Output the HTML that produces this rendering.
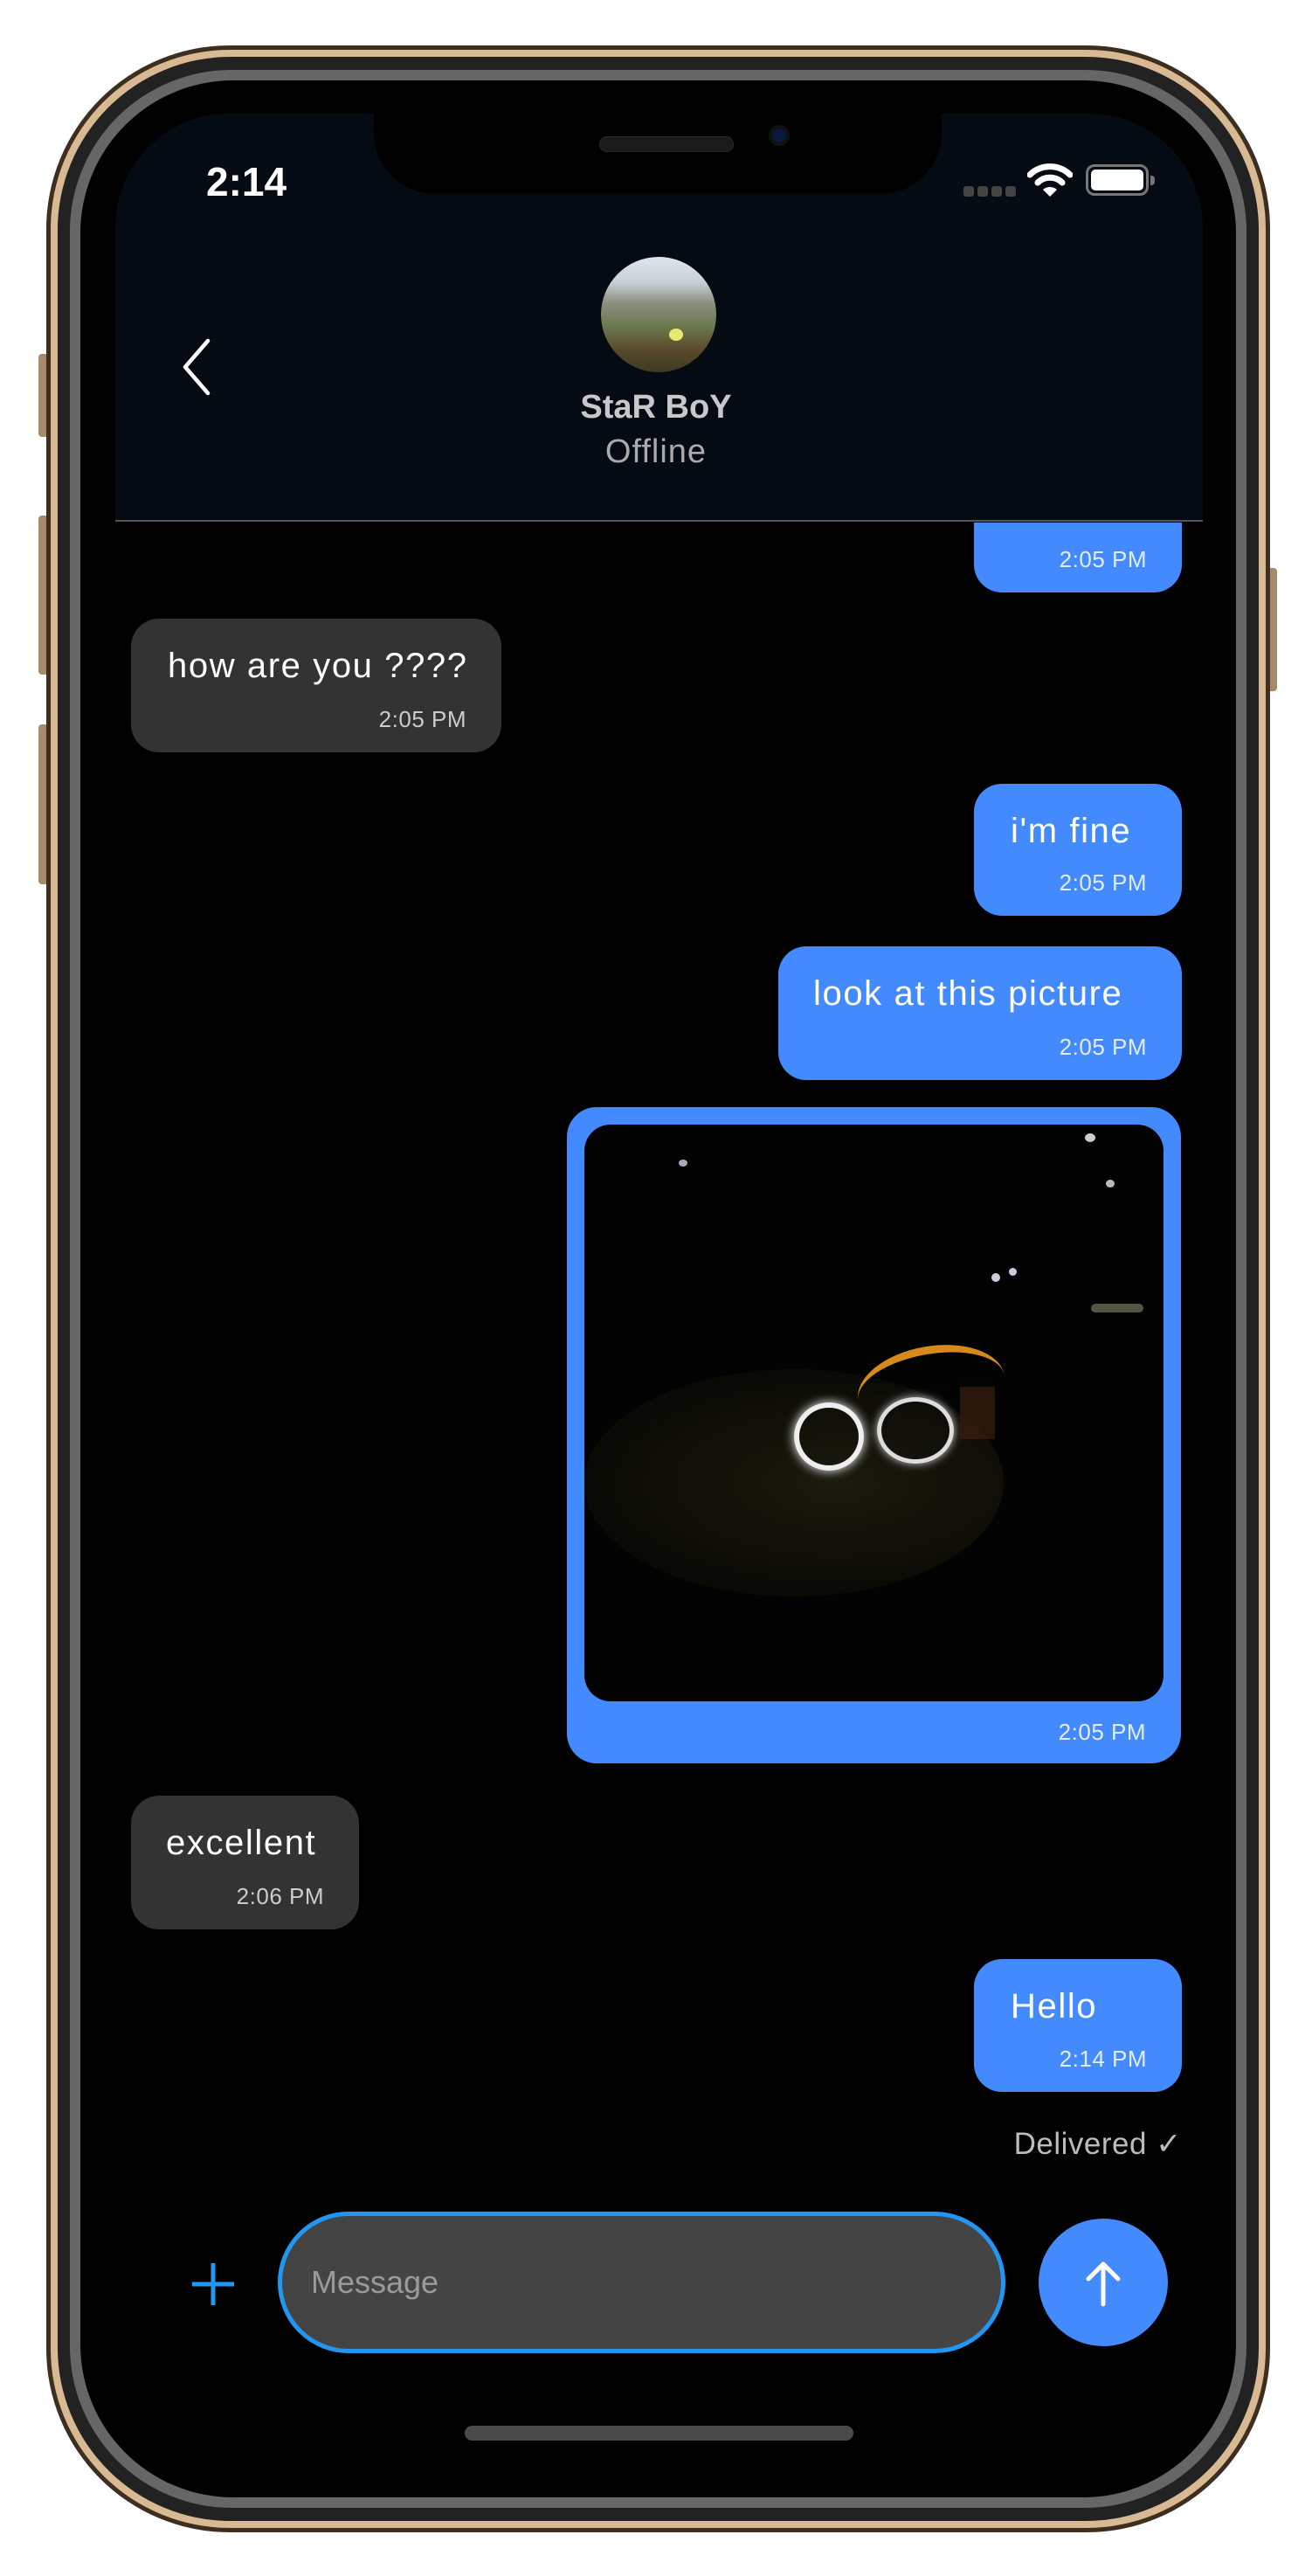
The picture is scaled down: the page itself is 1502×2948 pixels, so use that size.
<!DOCTYPE html>
<html><head><meta charset="utf-8">
<style>
*{margin:0;padding:0;box-sizing:border-box}
html,body{width:1502px;height:2948px;background:#fff;overflow:hidden;font-family:"Liberation Sans","DejaVu Sans",sans-serif}
.abs{position:absolute}
.bubble{position:absolute;border-radius:32px;color:#fff}
.in{background:#333}
.out{background:#448aff}
.bt{position:absolute;font-size:40px;letter-spacing:1.6px}
.ts{position:absolute;font-size:26px;right:40px;bottom:22px;color:#ccc;letter-spacing:0.5px}
.out .ts{color:#e3ecff}
</style></head><body>
<!-- side buttons -->
<div class="abs" style="left:44px;top:405px;width:12px;height:95px;background:#a88a6a;border-radius:4px"></div>
<div class="abs" style="left:44px;top:590px;width:12px;height:182px;background:#a88a6a;border-radius:4px"></div>
<div class="abs" style="left:44px;top:829px;width:12px;height:183px;background:#a88a6a;border-radius:4px"></div>
<div class="abs" style="left:1450px;top:650px;width:12px;height:141px;background:#a88a6a;border-radius:4px"></div>
<!-- phone frame -->
<div class="abs" style="left:53px;top:52px;width:1401px;height:2846px;border-radius:210px;background:#3e2e20"></div>
<div class="abs" style="left:58px;top:57px;width:1391px;height:2836px;border-radius:205px;background:#d9b894"></div>
<div class="abs" style="left:66px;top:65px;width:1375px;height:2820px;border-radius:198px;background:#222"></div>
<div class="abs" style="left:80px;top:80px;width:1347px;height:2790px;border-radius:185px;background:#666"></div>
<div class="abs" style="left:92px;top:92px;width:1323px;height:2766px;border-radius:175px;background:#000"></div>
<!-- screen -->
<div class="abs" style="left:132px;top:130px;width:1245px;height:2689px;border-radius:130px;background:#000;overflow:hidden">
  <div class="abs" style="left:0;top:0;width:1245px;height:466px;background:#050b12"></div>
  <div class="abs" style="left:0;top:465px;width:1245px;height:2px;background:#555"></div>
  <div class="abs" style="left:296px;top:-10px;width:650px;height:102px;background:#000;border-radius:0 0 70px 70px"></div>
</div>
<div class="abs" style="left:686px;top:156px;width:154px;height:18px;border-radius:9px;background:#1a1a1a;border:1px solid #2a2a2a"></div>
<div class="abs" style="left:880px;top:143px;width:24px;height:24px;border-radius:50%;background:#0a1a3a;border:4px solid #111"></div>
<!-- status bar -->
<div class="abs" style="left:236px;top:181px;font-size:46px;font-weight:bold;color:#fff">2:14</div>
<div class="abs" style="left:1103px;top:213px;width:12px;height:12px;border-radius:3px;background:#444"></div>
<div class="abs" style="left:1119px;top:213px;width:12px;height:12px;border-radius:3px;background:#444"></div>
<div class="abs" style="left:1135px;top:213px;width:12px;height:12px;border-radius:3px;background:#444"></div>
<div class="abs" style="left:1151px;top:213px;width:12px;height:12px;border-radius:3px;background:#444"></div>
<svg class="abs" style="left:1176px;top:186px" width="52" height="40" viewBox="0 0 52 40"><path d="M3 14 A33 33 0 0 1 49 14" stroke="#fff" stroke-width="7" fill="none" stroke-linecap="round"/><path d="M12 23 A20 20 0 0 1 40 23" stroke="#fff" stroke-width="7" fill="none" stroke-linecap="round"/><path d="M18 31 L26 39 L34 31 A12 12 0 0 0 18 31Z" fill="#fff"/></svg>
<div class="abs" style="left:1243px;top:188px;width:72px;height:36px;border-radius:10px;border:3px solid #777"></div>
<div class="abs" style="left:1249px;top:194px;width:60px;height:24px;border-radius:5px;background:#fff"></div>
<div class="abs" style="left:1317px;top:201px;width:5px;height:11px;border-radius:0 4px 4px 0;background:#777"></div>
<!-- header -->
<svg class="abs" style="left:200px;top:384px" width="50" height="72" viewBox="0 0 50 72"><path d="M38 6 L12 36 L38 66" stroke="#fff" stroke-width="4.5" fill="none" stroke-linecap="round" stroke-linejoin="round"/></svg>
<div class="abs" style="left:688px;top:294px;width:132px;height:132px;border-radius:50%;overflow:hidden;background:linear-gradient(180deg,#dfe6ee 0%,#c9d0d6 22%,#8a8f80 40%,#6c7a4e 60%,#5a4a2c 80%,#3e3a22 100%)">
  <div class="abs" style="left:78px;top:82px;width:16px;height:14px;border-radius:50%;background:#e8e870"></div>
</div>
<div class="abs" style="left:0;width:1502px;top:445px;text-align:center;font-size:38px;color:#c8c8c8;font-weight:bold">StaR BoY</div>
<div class="abs" style="left:0;width:1502px;top:496px;text-align:center;font-size:38px;color:#aaa;letter-spacing:1px">Offline</div>
<!-- messages -->
<div class="abs" style="left:132px;top:598px;width:1245px;height:2221px;overflow:hidden">
  <div class="bubble out" style="left:983px;top:-40px;width:238px;height:120px"><div class="ts">2:05 PM</div></div>
</div>
<div class="bubble in" style="left:150px;top:708px;width:424px;height:153px"><div class="bt" style="left:42px;top:32px">how are you ????</div><div class="ts">2:05 PM</div></div>
<div class="bubble out" style="left:1115px;top:897px;width:238px;height:151px"><div class="bt" style="left:42px;top:32px">i'm fine</div><div class="ts">2:05 PM</div></div>
<div class="bubble out" style="left:891px;top:1083px;width:462px;height:153px"><div class="bt" style="left:40px;top:32px">look at this picture</div><div class="ts">2:05 PM</div></div>
<div class="bubble out" style="left:649px;top:1267px;width:703px;height:751px;border-radius:34px"><div class="ts" style="bottom:20px">2:05 PM</div></div>
<div class="abs" style="left:669px;top:1287px;width:663px;height:660px;border-radius:30px;overflow:hidden;background:#030303">
  <div class="abs" style="left:0;top:280px;width:480px;height:260px;border-radius:50%;background:radial-gradient(ellipse at 60% 50%,#1a1a0e 0%,#0c0c06 60%,transparent 100%)"></div>
  <div class="abs" style="left:308px;top:254px;width:170px;height:48px;border-top:9px solid #d58a1a;border-radius:50% 50% 0 0/100% 100% 0 0;transform:rotate(-10deg)"></div>
  <div class="abs" style="left:240px;top:318px;width:80px;height:78px;border-radius:50%;border:6px solid #eee;box-shadow:0 0 12px #fff"></div>
  <div class="abs" style="left:335px;top:312px;width:88px;height:76px;border-radius:50%;border:5px solid #ddd;box-shadow:0 0 10px #ccc"></div>
  <div class="abs" style="left:430px;top:300px;width:40px;height:60px;background:#3a2010;opacity:.7"></div>
  <div class="abs" style="left:108px;top:40px;width:10px;height:8px;border-radius:50%;background:#aab"></div>
  <div class="abs" style="left:573px;top:10px;width:12px;height:10px;border-radius:50%;background:#ccc"></div>
  <div class="abs" style="left:597px;top:63px;width:10px;height:9px;border-radius:50%;background:#bbb"></div>
  <div class="abs" style="left:466px;top:170px;width:10px;height:10px;border-radius:50%;background:#ccd"></div>
  <div class="abs" style="left:486px;top:164px;width:9px;height:9px;border-radius:50%;background:#ccd"></div>
  <div class="abs" style="left:580px;top:205px;width:60px;height:10px;border-radius:5px;background:#554"></div>
</div>
<div class="bubble in" style="left:150px;top:2055px;width:261px;height:153px"><div class="bt" style="left:40px;top:32px">excellent</div><div class="ts">2:06 PM</div></div>
<div class="bubble out" style="left:1115px;top:2242px;width:238px;height:152px"><div class="bt" style="left:42px;top:32px">Hello</div><div class="ts">2:14 PM</div></div>
<div class="abs" style="left:1000px;width:353px;top:2434px;text-align:right;font-size:35px;color:#bbb;letter-spacing:0.5px">Delivered ✓</div>
<!-- input -->
<svg class="abs" style="left:218px;top:2588px" width="52" height="52" viewBox="0 0 52 52"><path d="M26 2V50M2 26H50" stroke="#2196f3" stroke-width="5"/></svg>
<div class="abs" style="left:318px;top:2531px;width:833px;height:162px;border-radius:81px;background:#444;border:5px solid #2196f3"></div>
<div class="abs" style="left:356px;top:2591px;font-size:36px;color:#9a9a9a">Message</div>
<div class="abs" style="left:1189px;top:2539px;width:148px;height:146px;border-radius:50%;background:#448aff"></div>
<svg class="abs" style="left:1238px;top:2585px" width="50" height="56" viewBox="0 0 50 56"><path d="M25 52V6M8 23L25 6L42 23" stroke="#fff" stroke-width="5" fill="none" stroke-linecap="round" stroke-linejoin="round"/></svg>
<div class="abs" style="left:532px;top:2776px;width:445px;height:17px;border-radius:9px;background:#4a4a4a"></div>
</body></html>
